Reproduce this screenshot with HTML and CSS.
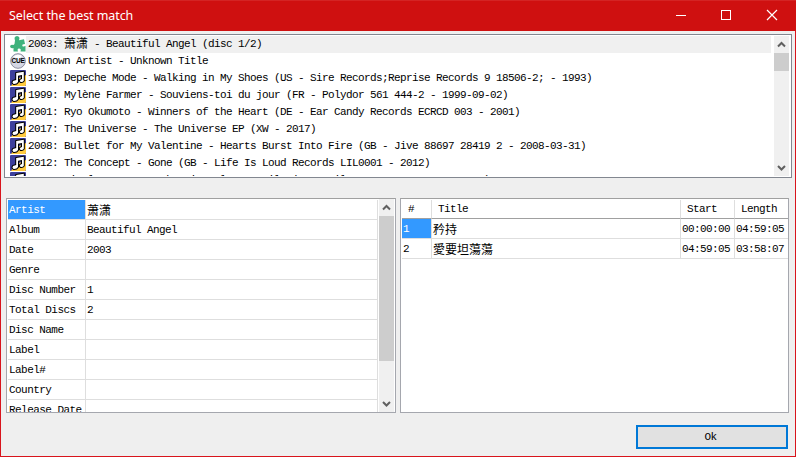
FILE: index.html
```
<!DOCTYPE html>
<html lang="en">
<head>
<meta charset="utf-8">
<title>Select the best match</title>
<link rel="stylesheet" href="styles.css">
</head>
<body>
<svg class="defs" width="0" height="0">
  <symbol id="note" viewBox="0 0 16 16">
    <rect width="16" height="16" rx="1" fill="#3c3f9c"/>
    <path d="M16 5V15L15 16H1L5 10Z" fill="#ffca3e"/>
    <path d="M6.2 3 13.8 1.8V10.8Q12.8 12.4 10.6 12 9 10.6 10.6 9.4L12 9V5L8 5.7V12Q6.8 14.2 3.6 14 1.6 12.8 3 11L6.2 10Z" fill="#fff" stroke="#000" stroke-width="2" stroke-linejoin="round"/>
    <path d="M6.2 3 13.8 1.8V10.8Q12.8 12.4 10.6 12 9 10.6 10.6 9.4L12 9V5L8 5.7V12Q6.8 14.2 3.6 14 1.6 12.8 3 11L6.2 10Z" fill="#fff"/>
  </symbol>
  <symbol id="up" viewBox="0 0 15 17"><path d="M4 10.5 7.5 7 11 10.5" fill="none" stroke="#606060" stroke-width="2"/></symbol>
  <symbol id="down" viewBox="0 0 15 17"><path d="M4 7 7.5 10.5 11 7" fill="none" stroke="#606060" stroke-width="2"/></symbol>
</svg>
<main class="window">
  <header class="titlebar">
    <h1>Select the best match</h1>
    <div class="controls">
      <svg viewBox="0 0 46 30"><path d="M15 15.5H25" stroke="#fff"/></svg>
      <svg viewBox="0 0 46 30"><rect x="14.5" y="10.5" width="9" height="9" fill="none" stroke="#fff"/></svg>
      <svg viewBox="0 0 46 30"><path d="M14 10 24 20M24 10 14 20" stroke="#fff" stroke-width="1.2"/></svg>
    </div>
  </header>
  <section class="matches">
    <ul>
      <li class="current"><svg viewBox="0 0 16 16"><path d="M5 4.5Q3.5.3 7 0 10.5.5 9 4.3L14 3.3 15 8Q11.5 8 12.5 10.3 14 11 15.5 9.8V15.5H10.5Q11.5 12.8 9 12.6 6.8 13 8 15.5H3.5V12Q.5 13 0 10.3.5 8 3.5 9L4.5 8Z" fill="#3fb27c"/></svg><span>2003: <b>萧潇</b> - Beautiful Angel (disc 1/2)</span></li>
      <li><svg viewBox="0 0 16 16"><circle cx="8" cy="8" r="7.3" fill="#d5d7e4" stroke="#8c8ea0"/><path d="M3 4Q7 0 12 3L9 6Z" fill="#fff"/><text x="8" y="10.4" text-anchor="middle" class="cue">CUE</text></svg><span>Unknown Artist - Unknown Title</span></li>
      <li><svg><use href="#note"/></svg><span>1993: Depeche Mode - Walking in My Shoes (US - Sire Records;Reprise Records 9 18506-2; - 1993)</span></li>
      <li><svg><use href="#note"/></svg><span>1999: Mylène Farmer - Souviens-toi du jour (FR - Polydor 561 444-2 - 1999-09-02)</span></li>
      <li><svg><use href="#note"/></svg><span>2001: Ryo Okumoto - Winners of the Heart (DE - Ear Candy Records ECRCD 003 - 2001)</span></li>
      <li><svg><use href="#note"/></svg><span>2017: The Universe - The Universe EP (XW - 2017)</span></li>
      <li><svg><use href="#note"/></svg><span>2008: Bullet for My Valentine - Hearts Burst Into Fire (GB - Jive 88697 28419 2 - 2008-03-31)</span></li>
      <li><svg><use href="#note"/></svg><span>2012: The Concept - Gone (GB - Life Is Loud Records LIL0001 - 2012)</span></li>
      <li><svg><use href="#note"/></svg><span>2012: Single Moons - Oak Rain Gale On Sails (GB - File Tapes FR200421 - 2012)</span></li>
    </ul>
    <div class="scroll short"><svg><use href="#up"/></svg><i></i><svg><use href="#down"/></svg></div>
  </section>
  <div class="panels">
    <section class="panel meta">
      <dl>
        <dt class="selected">Artist</dt><dd><b>萧潇</b></dd>
        <dt>Album</dt><dd>Beautiful Angel</dd>
        <dt>Date</dt><dd>2003</dd>
        <dt>Genre</dt><dd></dd>
        <dt>Disc Number</dt><dd>1</dd>
        <dt>Total Discs</dt><dd>2</dd>
        <dt>Disc Name</dt><dd></dd>
        <dt>Label</dt><dd></dd>
        <dt>Label#</dt><dd></dd>
        <dt>Country</dt><dd></dd>
        <dt>Release Date</dt><dd></dd>
      </dl>
      <div class="scroll long"><svg><use href="#up"/></svg><i></i><svg><use href="#down"/></svg></div>
    </section>
    <section class="panel tracks">
      <div class="row head"><span>#</span><span>Title</span><span>Start</span><span>Length</span></div>
      <div class="row"><span class="selected">1</span><span><b>矜持</b></span><span>00:00:00</span><span>04:59:05</span></div>
      <div class="row"><span>2</span><span><b>愛要坦蕩蕩</b></span><span>04:59:05</span><span>03:58:07</span></div>
    </section>
  </div>
  <footer><button>Ok</button></footer>
</main>
</body>
</html>
```
FILE: styles.css
```
* { box-sizing: border-box; margin: 0; padding: 0; }
body {
  font: 11px/17px "Liberation Mono", "Noto Sans CJK SC", monospace;
  letter-spacing: -0.6px;
  color: #000;
  overflow: hidden;
}
.defs { display: none; }
b { font: 12px/15px "Noto Sans CJK SC", sans-serif; letter-spacing: 0; }
.window {
  width: 796px;
  height: 457px;
  background: #efefef;
  border: 1px solid #d8141c;
  border-top: 0;
  display: flex;
  flex-direction: column;
}
.titlebar {
  height: 31px;
  flex: none;
  background: #cf1010;
  border-top: 1px solid #d42424;
  margin: 0 -1px;
  padding: 0 0 0 9px;
  display: flex;
  justify-content: space-between;
}
.titlebar h1 {
  font: 12.5px/29px "Noto Sans", sans-serif;
  letter-spacing: -0.08px;
  color: #fff;
}
.controls { display: flex; margin-right: -3px; }
.controls svg { width: 46px; height: 30px; margin-top: -1px; }

.matches {
  height: 144px;
  flex: none;
  margin: 3px 3px 0 3px;
  border: 1px solid #828790;
  background: #fff;
  padding: 1px 2px 1px 5px;
  display: flex;
  gap: 3px;
}
.matches ul { flex: 1; overflow: hidden; list-style: none; }
.matches li { height: 17px; display: flex; white-space: pre; }
.matches li svg { width: 16px; height: 16px; margin-right: 1px; flex: none; }
.matches li span { flex: 1; padding-left: 1px; height: 17px; }
.matches li b { line-height: 1; vertical-align: -1px; }
.matches .current { background: linear-gradient(90deg, #fff 16px, #f0f0f0 16px); }
.matches .current span { line-height: 16px; }
.cue { font: bold 6.5px "Liberation Sans", sans-serif; letter-spacing: -.2px; }

.scroll { width: 15px; flex: none; background: #f0f0f0; display: flex; flex-direction: column; }
.scroll svg { width: 15px; height: 17px; flex: none; }
.scroll i { background: #cdcdcd; }
.scroll svg:last-child { margin-top: auto; }
.short i { height: 18px; }
.long i { height: 145px; }

.panels { display: flex; gap: 4px; margin: 20px 6px 0 5px; height: 215px; flex: none; }
.panel { border: 1px solid #a5a7ae; border-top-color: #a0a0a0; background: #fff; overflow: hidden; }
.meta { width: 390px; display: flex; gap: 1px; padding-right: 1px; }
.meta dl {
  flex: 1;
  display: grid;
  grid-template-columns: 78px 1fr;
  grid-auto-rows: 20px;
  padding: 1px 0 0 1px;
  line-height: 21px;
  height: 213px;
  overflow: hidden;
}
.meta dt, .meta dd { border-right: 1px solid #dedede; border-bottom: 1px solid #dedede; padding-left: 1px; white-space: nowrap; }
.meta dt { letter-spacing: -0.55px; }
.meta b { line-height: 20px; }
.selected { background: #3399ff; color: #fff; }
.tracks { flex: 1; padding: 1px 0 0 1px; }
.row { display: grid; grid-template-columns: 30px 249px 54px 54px; height: 20px; line-height: 20px; }
.row span { border-right: 1px solid #dedede; border-bottom: 1px solid #dedede; padding-left: 1px; overflow: hidden; white-space: nowrap; }
.row b { line-height: 19px; }
.head { height: 19px; line-height: 18px; }
.head span { border-bottom-color: #a0a0a0; padding-left: 6px; }
footer { display: flex; justify-content: flex-end; padding: 12px 7px 0 0; }
button {
  width: 152px;
  height: 24px;
  background: #e1e1e1;
  border: 2px solid #0078d7;
  font: inherit;
  letter-spacing: inherit;
  color: inherit;
  padding-right: 3px;
}
```
